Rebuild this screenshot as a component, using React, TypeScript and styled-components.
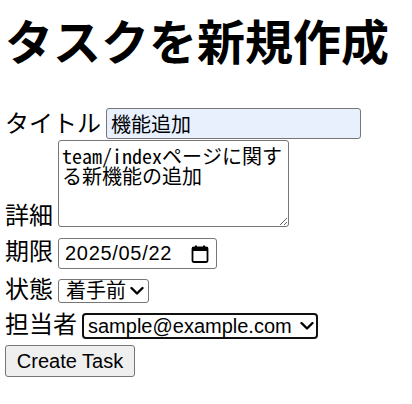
import React from "react";
import styled, { createGlobalStyle } from "styled-components";

const GlobalStyle = createGlobalStyle`
  html, body { margin: 0; padding: 0; background: #ffffff; }
  body { font-family: "Noto Sans CJK JP", sans-serif; color: #000000; }
`;

const controlFont = `"Liberation Sans", "Noto Sans CJK JP", Arial, sans-serif`;

const Page = styled.main`
  padding: 0 5px;
`;

const Heading = styled.h1`
  margin: 15px 0 45px;
  font-family: "Noto Sans CJK JP", sans-serif;
  font-size: 48px;
  line-height: 48px;
  font-weight: 700;
`;

const Form = styled.form`
  display: flex;
  flex-direction: column;
  align-items: flex-start;
`;

const Row = styled.div<{ $space: number; $align?: string }>`
  display: flex;
  align-items: ${(p) => p.$align ?? "baseline"};
  gap: 5px;
  margin-top: ${(p) => p.$space}px;
`;

const Label = styled.label<{ $lift?: number }>`
  font-family: "Noto Sans CJK JP", sans-serif;
  font-size: 24px;
  line-height: 14px;
  padding-bottom: ${(p) => p.$lift ?? 0}px;
  white-space: nowrap;
`;

const TextInput = styled.input`
  box-sizing: border-box;
  width: 255px;
  height: 31px;
  padding: 0 4px;
  border: 1px solid #767676;
  border-radius: 3px;
  background: #e8f0fe;
  font-family: ${controlFont};
  font-size: 20px;
  color: #000;
  outline: none;
`;

const TextArea = styled.textarea`
  box-sizing: border-box;
  width: 231px;
  height: 87px;
  margin: 0;
  padding: 5px 3px 2px;
  border: 1px solid #767676;
  border-radius: 3px;
  font-family: "Noto Sans Mono CJK JP", "Liberation Mono", monospace;
  font-size: 20px;
  line-height: 20px;
  color: #000;
  background: #fff;
  outline: none;
`;

const DateField = styled.div`
  box-sizing: border-box;
  display: flex;
  align-items: center;
  justify-content: space-between;
  width: 159px;
  height: 31px;
  padding: 0 7px 0 6px;
  border: 1px solid #767676;
  border-radius: 3px;
  background: #fff;
  font-family: ${controlFont};
  font-size: 20px;
  line-height: 23px;
`;

const DateText = styled.span`
  color: #000;
  letter-spacing: 0.7px;
`;

const SelectWrap = styled.span`
  position: relative;
  display: inline-flex;
`;

const Chevron = styled.svg<{ $right: number }>`
  position: absolute;
  right: ${(p) => p.$right}px;
  top: 50%;
  transform: translateY(-50%);
  pointer-events: none;
`;

const Select = styled.select<{ $w: number; $h: number; $focused?: boolean }>`
  box-sizing: border-box;
  appearance: none;
  -webkit-appearance: none;
  width: ${(p) => p.$w}px;
  height: ${(p) => p.$h}px;
  margin: 0;
  padding: 0 22px 0 ${(p) => (p.$focused ? 4 : 7)}px;
  border: ${(p) => (p.$focused ? "2px solid #101010" : "1px solid #767676")};
  border-radius: ${(p) => (p.$focused ? 4 : 3)}px;
  background: #fff;
  color: #000;
  font-family: ${controlFont};
  font-size: 20px;
  outline: none;
`;

const Button = styled.button`
  box-sizing: border-box;
  width: 130px;
  height: 32px;
  margin: 0;
  padding: 0 9px;
  border: 1px solid #767676;
  border-radius: 3px;
  background: #efefef;
  color: #000;
  font-family: ${controlFont};
  font-size: 20px;
`;

const CalendarIcon = () => (
  <svg width="18" height="18" viewBox="0 0 18 18" aria-hidden="true">
    <rect x="4" y="0.5" width="2" height="3" fill="#000" />
    <rect x="12" y="0.5" width="2" height="3" fill="#000" />
    <rect x="1.5" y="2.5" width="15" height="14.5" rx="1.2" fill="none" stroke="#000" strokeWidth="1.8" />
    <rect x="1.5" y="2.5" width="15" height="3.5" fill="#000" />
  </svg>
);

const ChevronIcon = ({ right }: { right: number }) => (
  <Chevron $right={right} width="14" height="9" viewBox="0 0 14 9" aria-hidden="true">
    <path d="M1.5 1.5 L7 7 L12.5 1.5" fill="none" stroke="#000" strokeWidth="2.4" strokeLinecap="round" strokeLinejoin="round" />
  </Chevron>
);

export default function App() {
  return (
    <>
      <GlobalStyle />
      <Page>
        <Heading>タスクを新規作成</Heading>
        <Form onSubmit={(e) => e.preventDefault()}>
          <Row $space={0}>
            <Label htmlFor="title">タイトル</Label>
            <TextInput id="title" defaultValue="機能追加" />
          </Row>
          <Row $space={1} $align="flex-end">
            <Label htmlFor="detail" $lift={6}>詳細</Label>
            <TextArea id="detail" defaultValue="team/indexページに関する新機能の追加" />
          </Row>
          <Row $space={11}>
            <Label>期限</Label>
            <DateField>
              <DateText>2025/05/22</DateText>
              <CalendarIcon />
            </DateField>
          </Row>
          <Row $space={10}>
            <Label htmlFor="status">状態</Label>
            <SelectWrap>
              <Select id="status" $w={91} $h={24} defaultValue="着手前">
                <option>着手前</option>
                <option>進行中</option>
                <option>完了</option>
              </Select>
              <ChevronIcon right={5} />
            </SelectWrap>
          </Row>
          <Row $space={10}>
            <Label htmlFor="assignee">担当者</Label>
            <SelectWrap>
              <Select id="assignee" $w={236} $h={26} $focused defaultValue="sample@example.com">
                <option>sample@example.com</option>
              </Select>
              <ChevronIcon right={4} />
            </SelectWrap>
          </Row>
          <Row $space={6}>
            <Button type="submit">Create Task</Button>
          </Row>
        </Form>
      </Page>
    </>
  );
}
